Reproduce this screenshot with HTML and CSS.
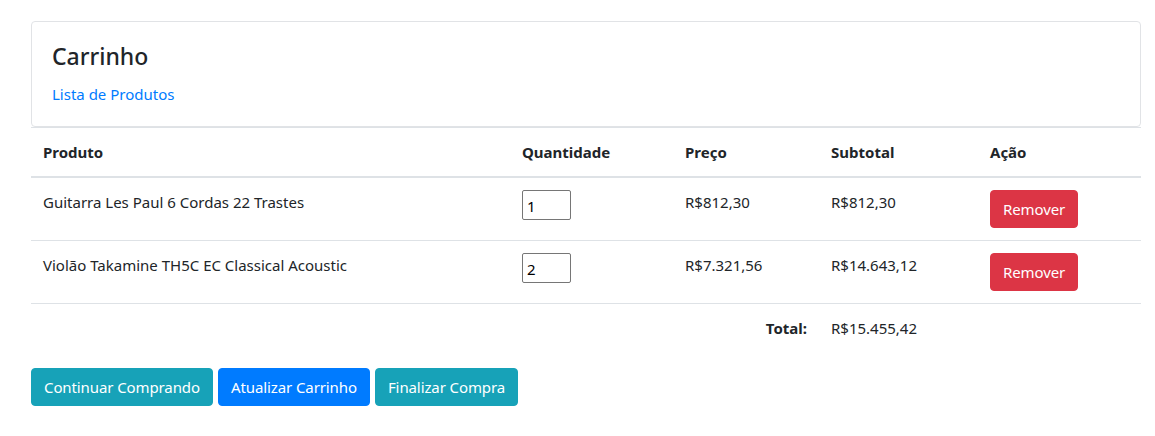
FILE: index.html
```html
<!DOCTYPE html>
<html lang="pt-BR">
<head>
<meta charset="utf-8">
<title>Carrinho</title>
<link rel="stylesheet" href="styles.css">
</head>
<body>
<div class="container">
  <div class="card">
    <div class="card-body">
      <h4 class="card-title">Carrinho</h4>
      <a class="card-link" href="#">Lista de Produtos</a>
    </div>
  </div>
  <table class="table">
    <colgroup>
      <col class="c1"><col class="c2"><col class="c3"><col class="c4"><col class="c5">
    </colgroup>
    <thead>
      <tr><th>Produto</th><th>Quantidade</th><th>Preço</th><th>Subtotal</th><th>Ação</th></tr>
    </thead>
    <tbody>
      <tr>
        <td>Guitarra Les Paul 6 Cordas 22 Trastes</td>
        <td><input class="qty" type="text" value="1"></td>
        <td>R$812,30</td>
        <td>R$812,30</td>
        <td><button class="btn btn-danger">Remover</button></td>
      </tr>
      <tr>
        <td>Violão Takamine TH5C EC Classical Acoustic</td>
        <td><input class="qty" type="text" value="2"></td>
        <td>R$7.321,56</td>
        <td>R$14.643,12</td>
        <td><button class="btn btn-danger">Remover</button></td>
      </tr>
      <tr class="total-row">
        <td></td>
        <td></td>
        <td class="total-label">Total:</td>
        <td>R$15.455,42</td>
        <td></td>
      </tr>
    </tbody>
  </table>
  <div class="actions">
    <button class="btn btn-info">Continuar Comprando</button>
    <button class="btn btn-primary">Atualizar Carrinho</button>
    <button class="btn btn-info">Finalizar Compra</button>
  </div>
</div>
</body>
</html>
```
FILE: styles.css
```css
* { box-sizing: border-box; }
body {
  margin: 0;
  font-family: "Noto Sans", "Open Sans", sans-serif;
  font-size: 15px;
  line-height: 24px;
  color: #212529;
  background: #fff;
}
.container {
  width: 1110px;
  margin-left: 31px;
  padding-top: 21px;
}
.card {
  border: 1px solid #e1e3e6;
  border-radius: 4px;
}
.card-body {
  padding: 20px;
}
.card-title {
  margin: 0 0 12px 0;
  font-size: 23px;
  font-weight: 500;
  line-height: 28px;
}
.card-link {
  color: #007bff;
  text-decoration: none;
  font-size: 15px;
}
.table {
  width: 100%;
  border-collapse: collapse;
  margin-bottom: 16px;
}
.c1 { width: 479px; }
.c2 { width: 163px; }
.c3 { width: 146px; }
.c4 { width: 159px; }
.c5 { width: 163px; }
.table th, .table td {
  padding: 12px;
  text-align: left;
  vertical-align: top;
  border-top: 1px solid #dee2e6;
}
.table th {
  font-weight: 700;
  border-bottom: 2px solid #dee2e6;
}
.qty {
  width: 49px;
  height: 30px;
  border: 1px solid #767676;
  border-radius: 2px;
  padding: 1px 4px 0 4px;
  font-family: "Noto Sans", "Open Sans", sans-serif;
  font-size: 15px;
  color: #000;
}
.table td.total-label {
  text-align: right;
  font-weight: 700;
}
.btn {
  display: inline-block;
  font-family: "Noto Sans", "Open Sans", sans-serif;
  font-size: 15px;
  line-height: 24px;
  padding: 6px 12px;
  border: 1px solid transparent;
  border-radius: 4px;
  color: #fff;
  letter-spacing: -0.1px;
  cursor: pointer;
}
.btn-danger { background: #dc3545; border-color: #dc3545; }
.btn-info { background: #17a2b8; border-color: #17a2b8; }
.btn-primary { background: #007bff; border-color: #007bff; }
.actions {
  display: flex;
  gap: 5px;
}
```
